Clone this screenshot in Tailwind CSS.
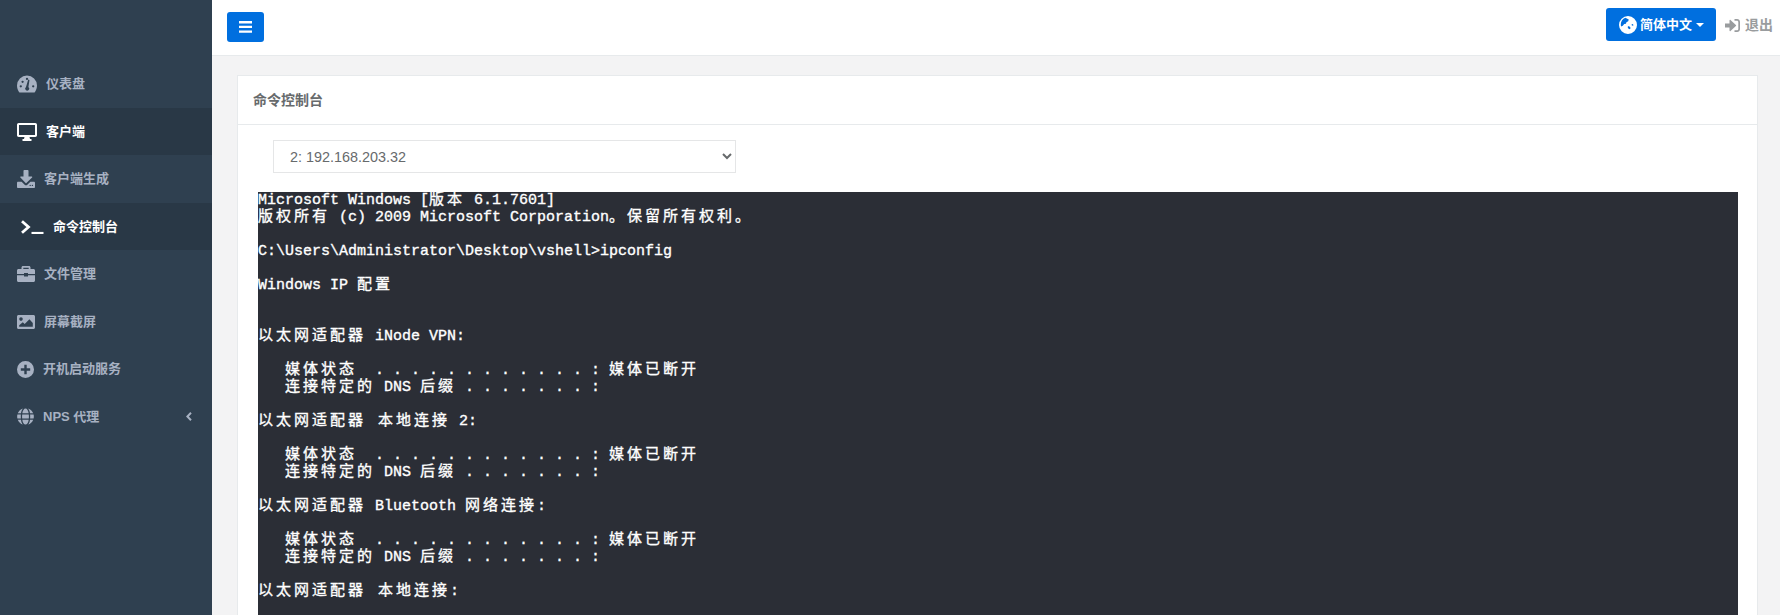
<!doctype html>
<html lang="zh"><head><meta charset="utf-8"><script src="https://cdn.jsdelivr.net/npm/@tailwindcss/browser@4"></script></head>
<body class="m-0 h-[615px] w-[1780px] overflow-hidden bg-[#f3f3f4] font-['Liberation_Sans','Noto_Sans_CJK_SC',sans-serif]">
<div class="flex h-[615px]">
<aside class="w-[212px] shrink-0 bg-[#2f4050] pt-[60px] text-[13px] font-bold text-[#a7b1c2]">
  <a class="flex h-[48px] items-center pl-[17px]"><svg class="h-[18px] w-[20px] mr-[9px]" viewBox="0 0 20 17" fill="currentColor"><path fill-rule="evenodd" d="M10 0a10 10 0 0 0-10 10c0 2.500.8 4.800 2 6.500.3.400.7.500 1.100.500h13.800c.4 0 .8-.1 1.100-.5 1.200-1.700 2-4 2-6.500A10 10 0 0 0 10 0zM10 2.300a1.100 1.100 0 1 1 0 2.300 1.100 1.100 0 0 1 0-2.300zM3.800 12a1.100 1.100 0 1 1 0-2.300 1.100 1.100 0 0 1 0 2.300zm1.800-4.500a1.100 1.100 0 1 1 0-2.300 1.100 1.100 0 0 1 0 2.300zM12.400 5l-1 6.500a2 2 0 1 1-2.400 0l2-6.800a.7.700 0 0 1 1.400.3zM16.200 12a1.100 1.100 0 1 1 0-2.300 1.100 1.100 0 0 1 0 2.300z"/></svg>仪表盘</a>
  <a class="flex h-[47px] items-center bg-[#293846] pl-[17px] text-white"><svg class="h-[18px] w-[20px] mr-[9px]" viewBox="0 0 20 18" fill="currentColor"><path fill-rule="evenodd" d="M1.700 0h16.600C19.200 0 20 .8 20 1.700v10.600c0 .9-.8 1.700-1.700 1.700H12.500l.5 2h1.500v2h-9v-2H7l.5-2H1.700C.8 14 0 13.200 0 12.300V1.700C0 .8.800 0 1.700 0zM2 2v10h16V2z"/></svg>客户端</a>
  <a class="flex h-[48px] items-center pl-[17px]"><svg class="h-[18px] w-[18px] mr-[9px]" viewBox="0 0 18 18" fill="currentColor"><path d="M7.300 0h3.400c.4 0 .8.400.8.800V6.500h3.100c.6 0 .9.700.5 1.100L9.400 13a.6.600 0 0 1-.8 0L3.400 7.600c-.4-.4-.1-1.100.5-1.100H6.500V.8c0-.4.400-.8.800-.8zM18 12.800v4.100c0 .6-.5 1.100-1.100 1.100H1.100C.5 18 0 17.500 0 16.900v-4.100c0-.6.500-1.100 1.100-1.100h3.500l2.800 2.800a2.200 2.200 0 0 0 3.200 0l2.800-2.800h3.500c.6 0 1.100.5 1.100 1.100zM13.900 15.400a.7.700 0 1 0-1.400 0 .7.700 0 0 0 1.400 0zm2.200 0a.7.700 0 1 0-1.400 0 .7.700 0 0 0 1.400 0z"/></svg>客户端生成</a>
  <a class="flex h-[47px] items-center bg-[#293846] pl-[21px] text-white"><svg class="h-[14px] w-[23px] mr-[9px]" viewBox="0 0 23 14" fill="none" stroke="currentColor"><path d="M1 1.200 7.500 7 1 12.800" stroke-width="2.800"/><path d="M10.500 13h12" stroke-width="2.200"/></svg>命令控制台</a>
  <a class="flex h-[48px] items-center pl-[17px]"><svg class="h-[16px] w-[18px] mr-[9px]" viewBox="0 0 18 16" fill="currentColor"><path fill-rule="evenodd" d="M6 0h6c.8 0 1.500.7 1.500 1.500V3h3c.8 0 1.500.7 1.500 1.500V8H11V7H7v1H0V4.500C0 3.700.7 3 1.500 3h3V1.500C4.500.7 5.200 0 6 0zm.300 1.800V3h5.400V1.800zM0 9.200h7v1.300h4V9.200h7v5.300c0 .8-.7 1.500-1.500 1.500h-15C.7 16 0 15.300 0 14.500z"/></svg>文件管理</a>
  <a class="flex h-[47px] items-center pl-[17px]"><svg class="h-[14px] w-[18px] mr-[9px]" viewBox="0 0 18 14" fill="currentColor"><path fill-rule="evenodd" d="M1.500 0h15C17.300 0 18 .7 18 1.500v11c0 .8-.7 1.500-1.500 1.500h-15C.7 14 0 13.300 0 12.500v-11C0 .7.700 0 1.500 0zM4 2.300a1.800 1.800 0 1 0 0 3.600 1.800 1.800 0 0 0 0-3.600zM2.200 11.800h13.600V8l-3.400-3.700L7.700 9 5.800 7.300l-3.600 2.900z"/></svg>屏幕截屏</a>
  <a class="flex h-[48px] items-center pl-[17px]"><svg class="h-[17px] w-[17px] mr-[9px]" viewBox="0 0 17 17" fill="currentColor"><path fill-rule="evenodd" d="M8.500 0a8.500 8.500 0 1 1 0 17 8.500 8.500 0 0 1 0-17zM7.300 3.800v3.500H3.800v2.400h3.500v3.500h2.400V9.700h3.500V7.300H9.700V3.800z"/></svg>开机启动服务</a>
  <a class="flex h-[47px] items-center pl-[17px] pr-[20px]"><svg class="h-[17px] w-[17px] mr-[9px]" viewBox="0 0 17 17" fill="currentColor"><path d="M6 .4C4.800 1.600 4.200 3.400 4 5.300h-3.200C1.700 3 3.600 1.100 6 .4zM11 .4c2.400.7 4.300 2.600 5.200 4.900H13C12.800 3.400 12.200 1.600 11 .4zM5.300 5.300C5.600 2.500 7 .4 8.500.4s2.900 2.100 3.200 4.900zM.4 6.500h3.500a21 21 0 0 0 0 4H.4a8.500 8.500 0 0 1 0-4zM5.200 6.500h6.600a17 17 0 0 1 0 4H5.200a17 17 0 0 1 0-4zM13.100 6.500h3.500a8.500 8.500 0 0 1 0 4h-3.500a21 21 0 0 0 0-4zM.8 11.700H4c.2 1.900.8 3.700 2 4.900-2.400-.7-4.300-2.600-5.200-4.900zM5.300 11.700h6.400c-.3 2.800-1.700 4.900-3.200 4.900s-2.900-2.100-3.200-4.900zM13 11.700h3.200c-.9 2.300-2.800 4.200-5.200 4.900 1.200-1.200 1.800-3 2-4.900z"/></svg>NPS 代理<svg class="ml-auto h-[9px] w-[6px]" viewBox="0 0 6 9" fill="none" stroke="currentColor" stroke-width="2"><path d="M5 .8 1.400 4.500 5 8.200"/></svg></a>
</aside>
<main class="min-w-0 flex-1">
  <header class="flex h-[56px] items-start justify-between border-b border-[#e7eaec] bg-white pl-[15px] pr-[7px]">
    <button class="mt-[12px] flex h-[30px] w-[37px] items-center justify-center rounded-[3px] bg-[#006fdf] text-white"><svg class="h-[12px] w-[13px]" viewBox="0 0 13 12" fill="currentColor"><path d="M0 0h13v2.400H0zM0 4.700h13v2.400H0zM0 9.400h13v2.400H0z"/></svg></button>
    <div class="flex items-start">
      <button class="mt-[8px] flex h-[33px] w-[110px] items-center rounded-[3px] bg-[#006fdf] pl-[13px] text-[13px] font-bold text-white"><svg class="mr-[3px] h-[18px] w-[18px]" viewBox="0 0 17 17" fill="currentColor"><path fill-rule="evenodd" d="M8.500 0a8.500 8.500 0 1 1 0 17 8.500 8.500 0 0 1 0-17zM6 1.700C3.500 2.600 1.700 5 1.700 8c0 .7.100 1.300.3 1.900l1.600-.6 1.300-1.700 1.700-.3.400-1.500 1.700-.8.500-1.600zM9.400 9.500l-1.200.6.300 1.400 1.500.9 1.100-1.100zM13 7.500l-1.200.6.500 1.100 1.500-.5z"/></svg>简体中文<span class="ml-[4px] h-0 w-0 border-x-[4px] border-t-[4px] border-x-transparent border-t-white"></span></button>
      <div class="ml-[9px] mt-[18px] flex items-center text-[14px] font-bold leading-[14px] text-[#999c9e]"><svg class="mr-[5px] h-[13px] w-[15px]" viewBox="0 0 15 13" fill="currentColor"><path d="M0 4.500h4.500V1.400c0-.6.600-.9 1-.5l5.400 5a.7.700 0 0 1 0 1.100l-5.400 5c-.4.400-1 .1-1-.5V8.500H0z"/><path d="M9.500 0H12c1.700 0 3 1.300 3 3v7c0 1.700-1.300 3-3 3H9.500v-1.700H12c.7 0 1.300-.6 1.300-1.300V3c0-.7-.6-1.300-1.300-1.300H9.500z"/></svg>退出</div>
    </div>
  </header>
  <section class="ml-[25px] mr-[22px] mt-[19px] border border-[#e7eaec] bg-white">
    <h5 class="flex h-[49px] items-center border-b border-[#e7eaec] pl-[15px] text-[14px] font-bold text-[#676a6c]">命令控制台</h5>
    <div class="pl-[20px] pr-[19px] pt-[15px]">
      <select class="ml-[15px] block h-[33px] w-[463px] border border-[#e5e6e7] bg-white pl-[12px] pr-[5px] text-[14.4px] text-[#676a6c]"><option>2: 192.168.203.32</option></select>
      <pre class="mt-[19px] h-[500px] overflow-hidden bg-[#2b2e36] font-['Liberation_Mono','Noto_Sans_CJK_SC',monospace] text-[15px] leading-[17px] text-white [-webkit-text-stroke:0.35px_white]"><div class="h-[17px]">Microsoft Windows [<span class="tracking-[3px]">版本</span> 6.1.7601]</div><div class="h-[17px]"><span class="tracking-[3px]">版权所有</span> (c) 2009 Microsoft Corporation<span class="tracking-[3px]">。保留所有权利。</span></div><div class="h-[17px]"></div><div class="h-[17px]">C:\Users\Administrator\Desktop\vshell&gt;ipconfig</div><div class="h-[17px]"></div><div class="h-[17px]">Windows IP <span class="tracking-[3px]">配置</span></div><div class="h-[17px]"></div><div class="h-[17px]"></div><div class="h-[17px]"><span class="tracking-[3px]">以太网适配器</span> iNode VPN:</div><div class="h-[17px]"></div><div class="h-[17px]">   <span class="tracking-[3px]">媒体状态</span>  . . . . . . . . . . . . : <span class="tracking-[3px]">媒体已断开</span></div><div class="h-[17px]">   <span class="tracking-[3px]">连接特定的</span> DNS <span class="tracking-[3px]">后缀</span> . . . . . . . : </div><div class="h-[17px]"></div><div class="h-[17px]"><span class="tracking-[3px]">以太网适配器 本地连接</span> 2:</div><div class="h-[17px]"></div><div class="h-[17px]">   <span class="tracking-[3px]">媒体状态</span>  . . . . . . . . . . . . : <span class="tracking-[3px]">媒体已断开</span></div><div class="h-[17px]">   <span class="tracking-[3px]">连接特定的</span> DNS <span class="tracking-[3px]">后缀</span> . . . . . . . : </div><div class="h-[17px]"></div><div class="h-[17px]"><span class="tracking-[3px]">以太网适配器</span> Bluetooth <span class="tracking-[3px]">网络连接</span>:</div><div class="h-[17px]"></div><div class="h-[17px]">   <span class="tracking-[3px]">媒体状态</span>  . . . . . . . . . . . . : <span class="tracking-[3px]">媒体已断开</span></div><div class="h-[17px]">   <span class="tracking-[3px]">连接特定的</span> DNS <span class="tracking-[3px]">后缀</span> . . . . . . . : </div><div class="h-[17px]"></div><div class="h-[17px]"><span class="tracking-[3px]">以太网适配器 本地连接</span>:</div></pre>
    </div>
  </section>
</main>
</div>
</body></html>
